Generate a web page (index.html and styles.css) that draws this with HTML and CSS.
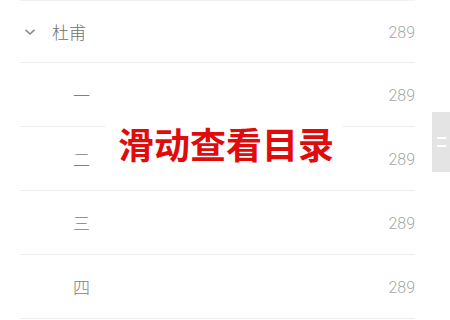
FILE: index.html
```html
<!DOCTYPE html>
<html lang="zh">
<head>
<meta charset="utf-8">
<link rel="stylesheet" href="styles.css">
</head>
<body>
<div class="page">
  <ul class="toc">
    <li class="row row--head">
      <span class="title">
        <svg class="chev" width="12" height="8" viewBox="0 0 12 8"><path d="M1.5 1.8 L6 6 L10.5 1.8" fill="none" stroke="#8a8a8a" stroke-width="1.6"/></svg>
        <span class="name">杜甫</span>
      </span>
      <span class="count">289</span>
    </li>
    <li class="row"><span class="sub">一</span><span class="count">289</span></li>
    <li class="row"><span class="sub">二</span><span class="count">289</span></li>
    <li class="row"><span class="sub">三</span><span class="count">289</span></li>
    <li class="row"><span class="sub">四</span><span class="count">289</span></li>
  </ul>
  <div class="banner">滑动查看目录</div>
  <div class="scroll-handle"><span></span><span></span></div>
</div>
</body>
</html>
```

FILE: styles.css
```css
html, body {
  margin: 0;
  padding: 0;
  background: #ffffff;
}
.page {
  position: relative;
  width: 450px;
  height: 320px;
  overflow: hidden;
  font-family: "Noto Sans CJK SC", "Roboto", sans-serif;
}
.toc {
  list-style: none;
  margin: 0 35px 0 20px;
  padding: 0;
  border-top: 1px solid #f2f2f2;
}
.row {
  display: flex;
  align-items: center;
  justify-content: space-between;
  height: 63px;
  border-bottom: 1px solid #ececec;
}
.row--head {
  height: 61px;
}
.title {
  display: flex;
  align-items: center;
}
.chev {
  margin-left: 4px;
  margin-right: 16px;
}
.name {
  font-size: 17px;
  font-weight: 300;
  color: #707070;
}
.sub {
  margin-left: 53px;
  font-size: 17px;
  font-weight: 300;
  color: #808080;
}
.count {
  font-family: "Roboto", sans-serif;
  font-size: 16px;
  font-weight: 300;
  color: #a8a8a8;
  padding-top: 2px;
}
.banner {
  position: absolute;
  left: 105px;
  top: 118px;
  padding: 0 9px 0 13px;
  background: #ffffff;
  color: #e00c0c;
  font-size: 36px;
  font-weight: 700;
  line-height: 50px;
}
.scroll-handle {
  position: absolute;
  right: 0;
  top: 112px;
  width: 18px;
  height: 60px;
  background: #e4e4e4;
  display: flex;
  flex-direction: column;
  align-items: center;
  justify-content: center;
  gap: 6px;
}
.scroll-handle span {
  display: block;
  width: 9px;
  height: 2px;
  background: #ffffff;
}
```
